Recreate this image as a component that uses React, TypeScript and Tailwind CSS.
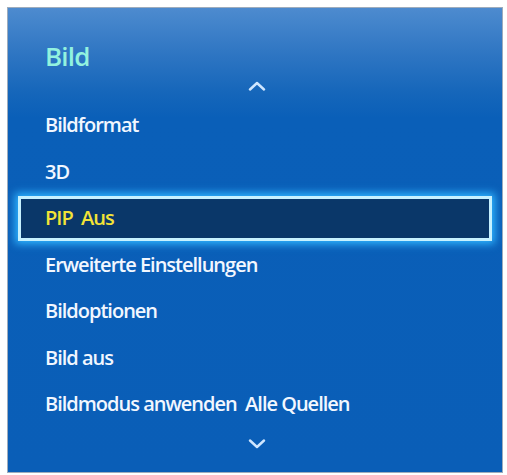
import React from "react";

const items = [
  "Bildformat",
  "3D",
  "PIP  Aus",
  "Erweiterte Einstellungen",
  "Bildoptionen",
  "Bild aus",
  "Bildmodus anwenden  Alle Quellen",
];

function Chevron({ up }: { up?: boolean }) {
  return (
    <svg width="18" height="10" viewBox="0 0 18 10" className="block">
      <polyline
        points={up ? "2,8.5 9,2 16,8.5" : "2,1.5 9,8 16,1.5"}
        fill="none"
        stroke="#cfe6ff"
        strokeWidth="2.4"
        strokeLinecap="round"
        strokeLinejoin="round"
      />
    </svg>
  );
}

export default function App() {
  return (
    <div
      className="w-[507px] h-[475px] bg-white pt-[7px] pl-[7px]"
      style={{ fontFamily: '"Open Sans", "Noto Sans", sans-serif' }}
    >
      <div className="w-[496px] h-[466px] border border-[#9eacbc] bg-[linear-gradient(180deg,#4d8bcf_0px,#2f76c3_45px,#1566ba_85px,#0a5fb8_110px,#0a5eb7_100%)] flex flex-col">
        <div className="pl-[37px] pt-[35px] h-[26px] box-content text-[26px] leading-[26px] font-semibold text-[#92f2df] tracking-[-0.8px]">
          Bild
        </div>
        <div className="flex justify-center mt-[12px] pl-[4px]">
          <Chevron up />
        </div>
        <div className="mt-[11px] flex flex-col">
          {items.map((t, i) =>
            i === 2 ? (
              <div key={t} className="h-[46.5px] flex items-center">
                <div className="mx-[10px] w-full h-[45px] border-[3px] border-[#c6f1ff] bg-[#0a3769] shadow-[0_0_8px_3px_#2fb4ff] flex items-center pl-[24px] text-[20px] font-semibold text-[#f2e337] tracking-[-1px] whitespace-pre">
                  {t}
                </div>
              </div>
            ) : (
              <div
                key={t}
                className="h-[46.5px] flex items-center pl-[37px] text-[20px] font-semibold text-[#f2f7ff] tracking-[-1px] whitespace-pre"
              >
                {t}
              </div>
            )
          )}
        </div>
        <div className="flex justify-center mt-[11px] pl-[4px]">
          <Chevron />
        </div>
      </div>
    </div>
  );
}
